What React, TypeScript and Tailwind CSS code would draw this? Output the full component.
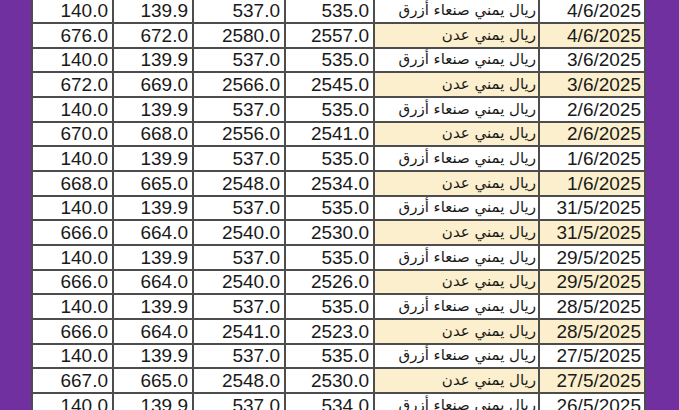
import React from "react";

type Row = { a: string; b: string; c: string; d: string; aden: boolean; date: string };

const raw: [string, string, string, string, boolean, string][] = [
  ["140.0", "139.9", "537.0", "535.0", false, "4/6/2025"],
  ["676.0", "672.0", "2580.0", "2557.0", true, "4/6/2025"],
  ["140.0", "139.9", "537.0", "535.0", false, "3/6/2025"],
  ["672.0", "669.0", "2566.0", "2545.0", true, "3/6/2025"],
  ["140.0", "139.9", "537.0", "535.0", false, "2/6/2025"],
  ["670.0", "668.0", "2556.0", "2541.0", true, "2/6/2025"],
  ["140.0", "139.9", "537.0", "535.0", false, "1/6/2025"],
  ["668.0", "665.0", "2548.0", "2534.0", true, "1/6/2025"],
  ["140.0", "139.9", "537.0", "535.0", false, "31/5/2025"],
  ["666.0", "664.0", "2540.0", "2530.0", true, "31/5/2025"],
  ["140.0", "139.9", "537.0", "535.0", false, "29/5/2025"],
  ["666.0", "664.0", "2540.0", "2526.0", true, "29/5/2025"],
  ["140.0", "139.9", "537.0", "535.0", false, "28/5/2025"],
  ["666.0", "664.0", "2541.0", "2523.0", true, "28/5/2025"],
  ["140.0", "139.9", "537.0", "535.0", false, "27/5/2025"],
  ["667.0", "665.0", "2548.0", "2530.0", true, "27/5/2025"],
  ["140.0", "139.9", "537.0", "534.0", false, "26/5/2025"],
];

const rows: Row[] = raw.map(([a, b, c, d, aden, date]) => ({ a, b, c, d, aden, date }));

const num =
  "bg-white h-[22.67px] flex items-center justify-end pr-[4px] text-[19px] leading-none text-[#1a1a1a] font-['Liberation_Sans',Arial,sans-serif]";

export default function App() {
  return (
    <div className="w-[679px] h-[410px] overflow-hidden bg-[#7030a0] flex">
      <div className="w-[31px] shrink-0" />
      <div className="w-[615px] shrink-0 -mt-[2.67px] bg-[#4d4d4d] px-[2px] pt-[2px] flex flex-col gap-[2px] self-start">
        {rows.map((r, i) => (
          <div
            key={i}
            className="grid grid-cols-[79px_78px_90px_87px_163px_104px] gap-x-[2px]"
          >
            <div className={num}>{r.a}</div>
            <div className={num}>{r.b}</div>
            <div className={num}>{r.c}</div>
            <div className={num}>{r.d}</div>
            <div
              dir="rtl"
              className={`${r.aden ? "bg-[#fbefcd]" : "bg-white"} h-[22.67px] flex items-center justify-start pr-[2px] text-[15px] leading-none text-[#1a1a1a] font-['DejaVu_Sans',sans-serif]`}
            >
              {r.aden ? "ريال يمني عدن" : "ريال يمني صنعاء أزرق"}
            </div>
            <div
              className={`${r.aden ? "bg-[#fbefcd]" : "bg-white"} h-[22.67px] flex items-center justify-end pr-[3px] text-[19px] leading-none text-[#1a1a1a] font-['Liberation_Sans',Arial,sans-serif]`}
            >
              {r.date}
            </div>
          </div>
        ))}
      </div>
      <div className="flex-1" />
    </div>
  );
}
